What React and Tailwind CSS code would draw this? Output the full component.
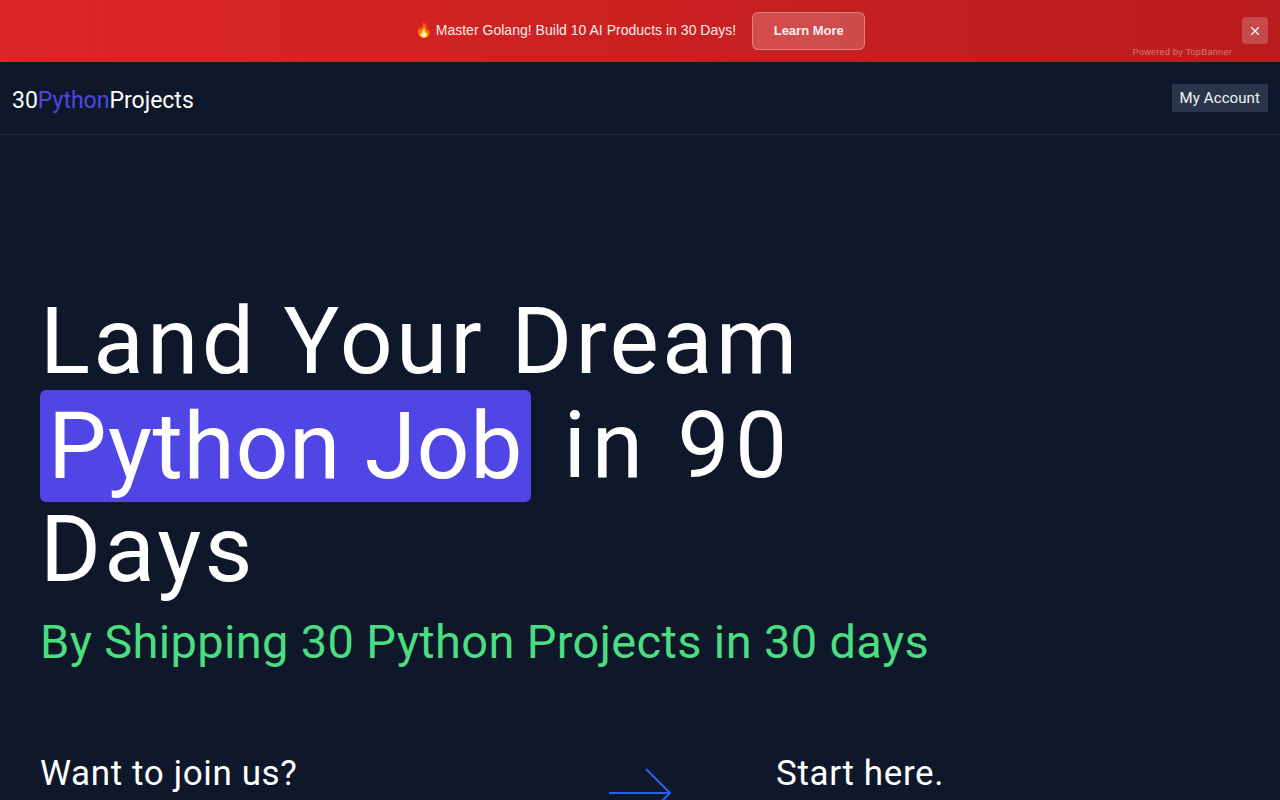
import React from "react";
import { X } from "lucide-react";

const App = () => {
  return (
    <div className="h-[800px] overflow-hidden bg-[#0f172a] text-white font-['Roboto',sans-serif]">
      {/* Banner */}
      <div className="relative flex h-[62px] items-center justify-center gap-4 bg-gradient-to-r from-[#dc2626] to-[#b91c1c] font-['Liberation_Sans',sans-serif]">
        <span className="mb-0.5 text-sm tracking-[0.02px] text-[#fbeaea]">🔥 Master Golang! Build 10 AI Products in 30 Days!</span>
        <button className="h-[38px] w-[113px] rounded-md border border-white/30 bg-white/20 text-[13px] font-bold text-[#fdf0f0]">
          Learn More
        </button>
        <button className="absolute right-3 top-[17px] flex h-[27px] w-[26px] items-center justify-center rounded bg-white/20 text-white">
          <X size={14} strokeWidth={2} />
        </button>
        <span className="absolute right-12 top-[46px] text-[9px] tracking-[0.3px] text-white/40">Powered by TopBanner</span>
      </div>

      {/* Nav */}
      <div className="flex h-[73px] items-start justify-between border-b border-[#1e293b] px-3 pt-[22px]">
        <div className="mt-px text-[23px] leading-8">
          30<span className="text-[#4f46e5]">Python</span>Projects
        </div>
        <button className="h-7 bg-[#293548] px-2 text-[15px] leading-7 tracking-[0.1px] text-[#f1f5f9]">My Account</button>
      </div>

      {/* Hero */}
      <div className="px-10 pt-[155px]">
        <h1 className="w-[800px] text-[93px] leading-[104px] tracking-[3.2px]">
          Land Your Dream <span className="rounded-md bg-[#4f46e5] px-2 py-[1.5px] tracking-[0.6px]">Python Job</span>
          <span className="ml-1 tracking-[5.5px]"> in 90</span> Days
        </h1>
        <p className="mt-2.5 text-[47px] leading-[60px] tracking-[0.35px] text-[#4ade80]">
          By Shipping 30 Python Projects in 30 days
        </p>
        <div className="mt-[78px] flex items-start text-[35px] leading-[48px] tracking-[0.62px]">
          <span className="w-[569px]">Want to join us?</span>
          <svg className="mt-[14px] shrink-0" width="68" height="60" viewBox="0 0 68 60" fill="none" stroke="#2563eb" strokeWidth="2">
            <path d="M0 29H61M37 5L61 29L37 53" />
          </svg>
          <span className="ml-[99px]">Start here.</span>
        </div>
      </div>
    </div>
  );
};

export default App;
